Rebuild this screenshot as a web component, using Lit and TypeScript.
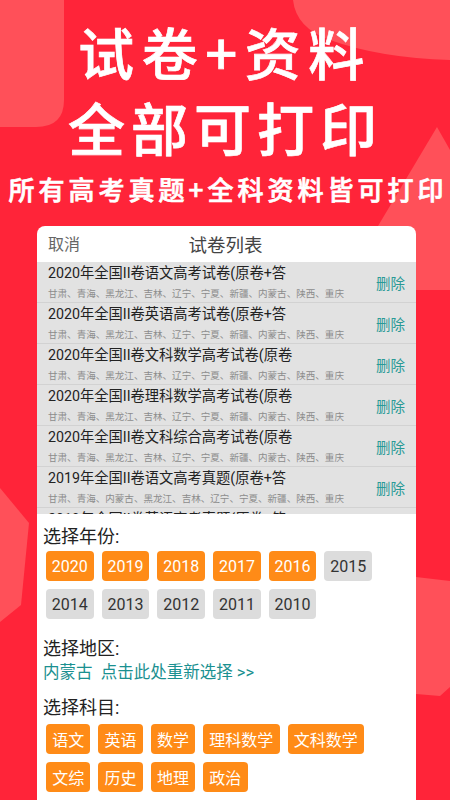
import { LitElement, html, css, svg } from "lit";
import { customElement } from "lit/decorators.js";

const R1 = "甘肃、青海、黑龙江、吉林、辽宁、宁夏、新疆、内蒙古、陕西、重庆";
const R2 = "甘肃、青海、内蒙古、黑龙江、吉林、辽宁、宁夏、新疆、陕西、重庆";
const papers = [
  ["2020年全国II卷语文高考试卷(原卷+答", R1],
  ["2020年全国II卷英语高考试卷(原卷+答", R1],
  ["2020年全国II卷文科数学高考试卷(原卷", R1],
  ["2020年全国II卷理科数学高考试卷(原卷", R1],
  ["2020年全国II卷文科综合高考试卷(原卷", R1],
  ["2019年全国II卷语文高考真题(原卷+答", R2],
  ["2019年全国II卷英语高考真题(原卷+答", R2],
];
const years = [2020, 2019, 2018, 2017, 2016, 2015, 2014, 2013, 2012, 2011, 2010];
const subjects = ["语文", "英语", "数学", "理科数学", "文科数学", "文综", "历史", "地理", "政治"];

@customElement("app-root")
export class AppRoot extends LitElement {
  static styles = css`
    :host {
      display: block;
      position: relative;
      width: 450px;
      height: 800px;
      overflow: hidden;
      background: #ff2439;
      font-family: Roboto, "Noto Sans CJK SC", sans-serif;
    }
    .deco { position: absolute; inset: 0; width: 450px; height: 800px; }
    .page { position: relative; display: flex; flex-direction: column; height: 800px; }
    .hero {
      color: #fff;
      text-align: center;
      font-weight: 500;
      height: 226px;
      flex: none;
      font-family: "Noto Sans CJK SC", sans-serif;
      -webkit-text-stroke: 0.7px #fff;
    }
    .l1 { font-size: 56px; letter-spacing: 7.6px; line-height: 76px; padding-top: 13px; }
    .l2 { font-size: 57px; letter-spacing: 6px; line-height: 76px; margin-top: -1px; padding-left: 1px; }
    .l3 { font-size: 26px; letter-spacing: 4px; line-height: 38px; margin-top: 6px; padding-left: 6px; white-space: nowrap; }
    .card {
      flex: 1;
      margin: 0 34px 0 37px;
      background: #fff;
      border-radius: 8px 8px 0 0;
      overflow: hidden;
      min-height: 0;
    }
    .head { height: 36px; display: flex; align-items: center; justify-content: center; position: relative; }
    .cancel { position: absolute; left: 11px; top: 7px; line-height: 24px; font-size: 16px; color: #666; }
    .title { font-size: 18.5px; color: #444; margin-left: -2px; }
    .list { height: 252px; overflow: hidden; background: #e2e2e2; }
    .row {
      height: 41px;
      box-sizing: border-box;
      border-bottom: 1px solid #d2d2d2;
      padding-left: 11px;
      display: flex;
      align-items: center;
    }
    .info { flex: 1; min-width: 0; margin-top: -1px; }
    .name { font-size: 14.25px; line-height: 20px; color: #222; white-space: nowrap; }
    .sub { font-size: 9.55px; line-height: 14px; margin-top: 4px; color: #8c8c8c; white-space: nowrap; }
    .del { font-size: 14.5px; color: #2a9a96; margin-right: 11px; }
    .label { font-size: 18px; line-height: 24px; color: #222; padding-left: 6px; }
    .years { margin-top: 11px; }
    .region { margin-top: 18px; }
    .pick { font-size: 16.5px; line-height: 24px; color: #1a9090; padding-left: 6px; white-space: pre; }
    .subj { margin-top: 11px; }
    .chips { display: flex; flex-wrap: wrap; gap: 8px; padding: 4px 0 0 9px; }
    .tight { padding-top: 2px; }
    .chip {
      height: 30px;
      box-sizing: border-box;
      display: flex;
      align-items: center;
      border-radius: 4px;
      font-size: 16px;
      padding: 0 6.2px;
      background: #ff8b17;
      color: #fff;
    }
    .yr { width: 47.7px; justify-content: center; padding: 0; }
    .off { background: #dcdcdc; color: #333; }
  `;

  render() {
    return html`
      <svg class="deco" viewBox="0 0 450 800" aria-hidden="true">
        ${svg`<g fill="#ff5059">
          <path d="M0 0H64V100Q64 127 36 127H0Z"/>
          <path d="M293 0Q296 28 330 40Q380 58 450 60V0Z"/>
          <path d="M437 127L378 226L416 290H450V150Z"/>
          <path d="M0 488L29 523L21 605L0 622Z"/>
          <path d="M416 577L450 581V687L440 696L416 694Z"/>
        </g>`}
      </svg>
      <div class="page">
        <div class="hero">
          <div class="l1">试卷+资料</div>
          <div class="l2">全部可打印</div>
          <div class="l3">所有高考真题+全科资料皆可打印</div>
        </div>
        <div class="card">
          <div class="head">
            <span class="cancel">取消</span>
            <span class="title">试卷列表</span>
          </div>
          <div class="list">
            ${papers.map(
              ([n, s]) => html`<div class="row">
                <div class="info">
                  <div class="name">${n}</div>
                  <div class="sub">${s}</div>
                </div>
                <span class="del">删除</span>
              </div>`
            )}
          </div>
          <div class="label years">选择年份:</div>
          <div class="chips tight">
            ${years.map((y) => html`<span class="chip yr ${y < 2016 ? "off" : ""}">${y}</span>`)}
          </div>
          <div class="label region">选择地区:</div>
          <div class="pick">内蒙古  点击此处重新选择 >></div>
          <div class="label subj">选择科目:</div>
          <div class="chips">
            ${subjects.map((s) => html`<span class="chip">${s}</span>`)}
          </div>
        </div>
      </div>
    `;
  }
}
